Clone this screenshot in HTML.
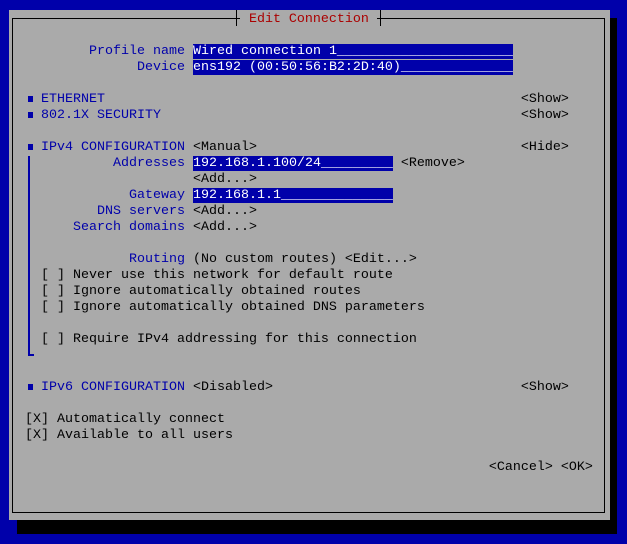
<!DOCTYPE html>
<html><head><meta charset="utf-8"><style>
body{margin:0;width:627px;height:544px;background:#0000aa;position:relative;overflow:hidden}
.p{position:absolute;left:9px;top:10px;width:601px;height:510px;background:#aaaaaa}
.sr{position:absolute;left:610px;top:18px;width:7px;height:516px;background:#000}
.sb{position:absolute;left:17px;top:520px;width:600px;height:14px;background:#000}
.bd{position:absolute;left:12px;top:18px;width:591px;height:493px;border:1px solid #000}
.r{position:absolute;left:9px;height:16px;line-height:16px;white-space:pre;font-family:"Liberation Mono",monospace;font-size:13.333px;color:#000;margin-top:2px}
.b{color:#0000aa}
.f{background:#0000aa;color:#fff}
.t{color:#aa0000}
.bl{position:absolute;width:5px;height:6px;background:#0000aa;left:28px}
</style></head><body>
<div class="p"></div><div class="sr"></div><div class="sb"></div>
<div class="bd"></div>
<div style="position:absolute;left:237px;top:10px;width:144px;height:16px;background:#aaa"></div>
<div style="position:absolute;left:236px;top:10px;width:1px;height:16px;background:#000"></div>
<div style="position:absolute;left:380px;top:10px;width:1px;height:16px;background:#000"></div>
<div style="position:absolute;left:236px;top:18px;width:4px;height:1px;background:#000"></div>
<div style="position:absolute;left:377px;top:18px;width:4px;height:1px;background:#000"></div>
<div class="r t" style="top:10px">                              Edit Connection</div>
<div class="r" style="top:42px"><span class="b">          Profile name </span><span class="f">Wired connection 1______________________</span></div>
<div class="r" style="top:58px"><span class="b">                Device </span><span class="f">ens192 (00:50:56:B2:2D:40)______________</span></div>
<div class="r" style="top:90px"><span class="b">    ETHERNET</span>                                                    &lt;Show&gt;</div>
<div class="r" style="top:106px"><span class="b">    802.1X SECURITY</span>                                             &lt;Show&gt;</div>
<div class="r" style="top:138px"><span class="b">    IPv4 CONFIGURATION</span> &lt;Manual&gt;                                 &lt;Hide&gt;</div>
<div class="r" style="top:154px"><span class="b">             Addresses </span><span class="f">192.168.1.100/24_________</span> &lt;Remove&gt;</div>
<div class="r" style="top:170px">                       &lt;Add...&gt;</div>
<div class="r" style="top:186px"><span class="b">               Gateway </span><span class="f">192.168.1.1______________</span></div>
<div class="r" style="top:202px"><span class="b">           DNS servers </span>&lt;Add...&gt;</div>
<div class="r" style="top:218px"><span class="b">        Search domains </span>&lt;Add...&gt;</div>
<div class="r" style="top:250px"><span class="b">               Routing </span>(No custom routes) &lt;Edit...&gt;</div>
<div class="r" style="top:266px">    [ ] Never use this network for default route</div>
<div class="r" style="top:282px">    [ ] Ignore automatically obtained routes</div>
<div class="r" style="top:298px">    [ ] Ignore automatically obtained DNS parameters</div>
<div class="r" style="top:330px">    [ ] Require IPv4 addressing for this connection</div>
<div class="r" style="top:378px"><span class="b">    IPv6 CONFIGURATION</span> &lt;Disabled&gt;                               &lt;Show&gt;</div>
<div class="r" style="top:410px">  [X] Automatically connect</div>
<div class="r" style="top:426px">  [X] Available to all users</div>
<div class="r" style="top:458px">                                                            &lt;Cancel&gt; &lt;OK&gt;</div>
<div class="bl" style="top:96px"></div>
<div class="bl" style="top:112px"></div>
<div class="bl" style="top:144px"></div>
<div class="bl" style="top:384px"></div>
<div style="position:absolute;left:28px;top:156px;width:2px;height:200px;background:#0000aa"></div>
<div style="position:absolute;left:28px;top:354px;width:6px;height:2px;background:#0000aa"></div>
</body></html>
